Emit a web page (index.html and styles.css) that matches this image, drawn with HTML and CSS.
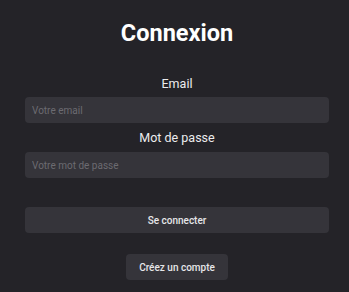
FILE: index.html
```html
<!DOCTYPE html>
<html lang="fr">
<head>
<meta charset="utf-8">
<link rel="stylesheet" href="styles.css">
</head>
<body>
<main class="page">
  <h1 class="title">Connexion</h1>
  <form class="form">
    <label class="label" for="email">Email</label>
    <input class="field" id="email" type="email" placeholder="Votre email">
    <label class="label label-pass" for="pass">Mot de passe</label>
    <input class="field" id="pass" type="password" placeholder="Votre mot de passe">
    <button class="btn btn-login" type="button">Se connecter</button>
  </form>
  <button class="btn btn-create" type="button">Créez un compte</button>
</main>
</body>
</html>
```
FILE: styles.css
```css
html, body {
  margin: 0;
  padding: 0;
  background: #242328;
  height: 100%;
}
body {
  font-family: Roboto, "Liberation Sans", sans-serif;
  color: #f2f2f4;
}
.page {
  display: flex;
  flex-direction: column;
  align-items: center;
  padding: 19px 20px 0 25px;
}
.title {
  margin: 0;
  font-size: 23.5px;
  line-height: 28px;
  font-weight: 700;
  color: #ffffff;
}
.form {
  width: 304px;
  display: flex;
  flex-direction: column;
  align-items: center;
  margin-top: 29px;
}
.label {
  font-size: 12.5px;
  line-height: 16px;
  color: #ececee;
  margin-bottom: 5px;
}
.label-pass {
  margin-top: 7px;
  margin-bottom: 6px;
}
.field {
  box-sizing: border-box;
  width: 100%;
  height: 26px;
  border: none;
  outline: none;
  border-radius: 4px;
  background: #35343a;
  padding: 0 7px;
  font-family: inherit;
  font-size: 10px;
  color: #ececee;
}
.field::placeholder {
  color: #6c6b71;
}
.btn {
  box-sizing: border-box;
  height: 26px;
  border: none;
  border-radius: 4px;
  background: #35343a;
  color: #e6e6e9;
  font-family: inherit;
  font-size: 10px;
  font-weight: 500;
  padding: 0;
}
.btn-login {
  width: 100%;
  margin-top: 29px;
}
.btn-create {
  width: 102px;
  margin-top: 21px;
}
```
